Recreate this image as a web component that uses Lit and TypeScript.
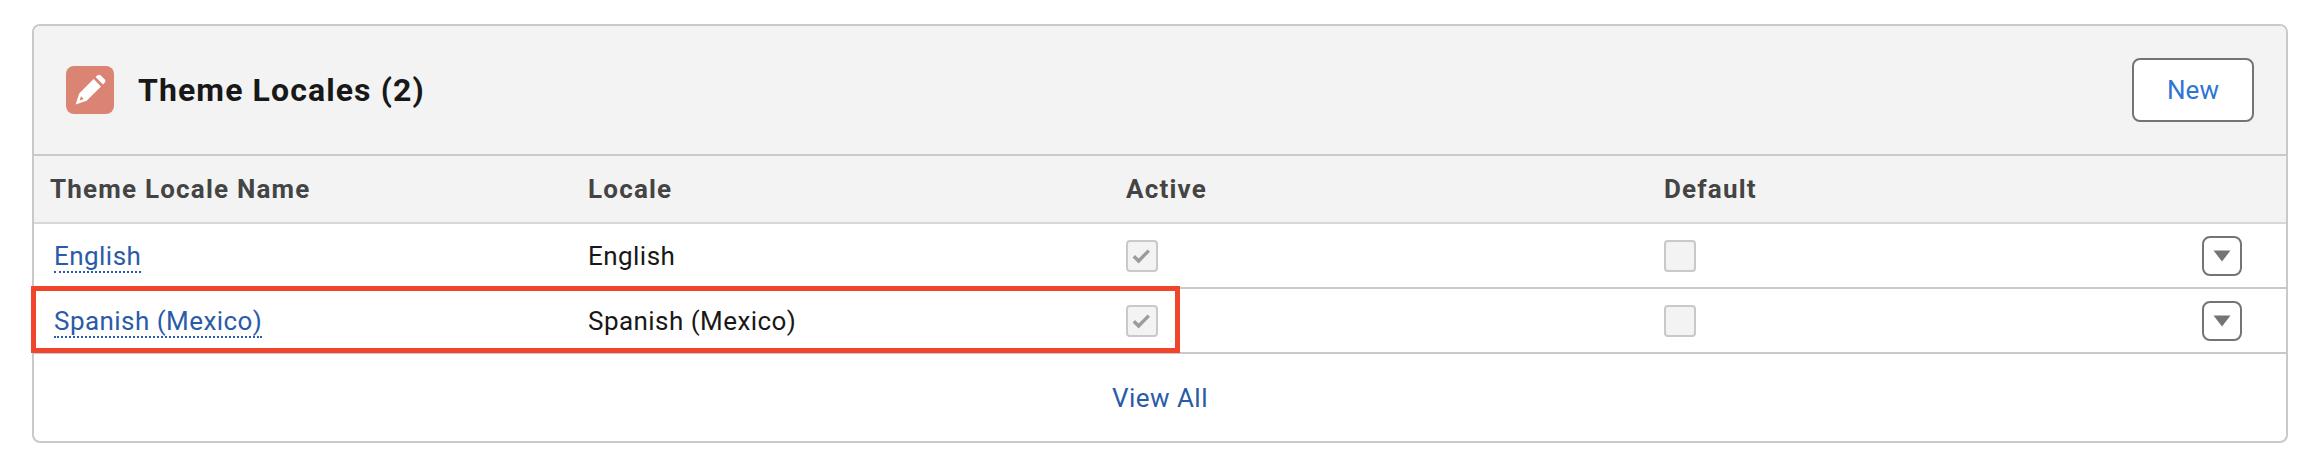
import { LitElement, html, css, svg } from "lit";
import { customElement } from "lit/decorators.js";

interface LocaleRow {
  name: string;
  locale: string;
  active: boolean;
  isDefault: boolean;
  highlighted: boolean;
}

const ROWS: LocaleRow[] = [
  { name: "English", locale: "English", active: true, isDefault: false, highlighted: false },
  { name: "Spanish (Mexico)", locale: "Spanish (Mexico)", active: true, isDefault: false, highlighted: true },
];

const PENCIL = svg`
  <path d="M31.2 9.4 29.6 11l7.4 7.4 1.6-1.6c1-1 1-2.6 0-3.6l-3.8-3.8c-1-1-2.6-1-3.6 0z" />
  <path fill-rule="evenodd" d="M27.6 13 13.2 27.4 9.6 38.4 20.6 34.8 35 20.4zM13.6 34.4l1.4-4.2 2.8 2.8z" />
`;

@customElement("app-root")
export class AppRoot extends LitElement {
  static styles = css`
    :host {
      display: block;
      width: 2320px;
      height: 460px;
      box-sizing: border-box;
      padding: 24px 32px 0 32px;
      background: #fff;
      font-family: Roboto, "Liberation Sans", sans-serif;
      color: #181818;
    }

    .card {
      box-sizing: border-box;
      height: 419px;
      border: 2px solid #c9c9c9;
      border-radius: 8px;
      background: #fff;
    }

    .header {
      box-sizing: border-box;
      height: 130px;
      display: flex;
      align-items: center;
      padding: 0 32px 0 32px;
      background: #f3f3f3;
      border-bottom: 2px solid #c9c9c9;
      border-radius: 6px 6px 0 0;
    }

    .icon {
      width: 48px;
      height: 48px;
      margin-right: 24px;
      border-radius: 8px;
      background: #dc8474;
      flex: none;
    }

    .icon svg {
      display: block;
      fill: #fff;
    }

    h2 {
      flex: 1;
      margin: 0;
      font-size: 32px;
      font-weight: 700;
      line-height: 48px;
      letter-spacing: 1.1px;
    }

    .new {
      box-sizing: border-box;
      width: 122px;
      height: 64px;
      border: 2px solid #747474;
      border-radius: 8px;
      background: #fff;
      color: #2e75d4;
      font: inherit;
      font-size: 26px;
    }

    .row {
      position: relative;
      box-sizing: border-box;
      display: grid;
      grid-template-columns: 554px 538px 538px 1fr;
      align-items: center;
      height: 65px;
      border-bottom: 2px solid #c9c9c9;
      font-size: 26px;
      letter-spacing: 0.45px;
    }

    .row > :first-child {
      padding-left: 16px;
    }

    .head {
      height: 68px;
      background: #f3f3f3;
      border-bottom-color: #d8d8d8;
      font-weight: 700;
      color: #444;
      letter-spacing: 1.2px;
    }

    .row > .name {
      padding-left: 20px;
    }

    a {
      color: #2a5ba8;
      text-decoration: none;
      border-bottom: 2px dotted #2a5ba8;
    }

    .box {
      box-sizing: border-box;
      width: 32px;
      height: 32px;
      border: 2px solid #c9c9c9;
      border-radius: 4px;
      background: #f3f3f3;
    }

    .box svg {
      display: block;
      fill: #9c9c9c;
    }

    .last {
      display: flex;
      align-items: center;
      justify-content: space-between;
      padding-right: 44px;
    }

    .menu {
      box-sizing: border-box;
      width: 40px;
      height: 40px;
      padding: 0;
      margin-left: auto;
      border: 2px solid #747474;
      border-radius: 8px;
      background: #fff;
    }

    .menu svg {
      display: block;
      margin: auto;
      fill: #747474;
    }

    .mark {
      position: absolute;
      left: -3px;
      top: -3px;
      box-sizing: border-box;
      width: 1149px;
      height: 67px;
      border: 5px solid #f0452b;
      pointer-events: none;
    }

    .footer {
      display: flex;
      justify-content: center;
      padding-top: 26px;
      font-size: 26px;
      line-height: 36px;
      letter-spacing: 0.45px;
    }

    .footer a {
      border-bottom: none;
    }
  `;

  private renderBox(checked: boolean) {
    return html`<div class="box">
      ${checked
        ? html`<svg width="28" height="28" viewBox="0 0 28 28">
            <path d="M4.6 15.4 7 13l3.6 3.6L19.6 7.4l2.4 2.4-11.4 11.6z" />
          </svg>`
        : ""}
    </div>`;
  }

  render() {
    return html`
      <div class="card">
        <div class="header">
          <div class="icon">
            <svg width="48" height="48" viewBox="0 0 48 48">${PENCIL}</svg>
          </div>
          <h2>Theme Locales (2)</h2>
          <button class="new">New</button>
        </div>
        <div class="row head">
          <div>Theme Locale Name</div>
          <div>Locale</div>
          <div>Active</div>
          <div>Default</div>
        </div>
        ${ROWS.map(
          (r) => html`
            <div class="row">
              <div class="name"><a href="#">${r.name}</a></div>
              <div>${r.locale}</div>
              <div>${this.renderBox(r.active)}</div>
              <div class="last">
                ${this.renderBox(r.isDefault)}
                <button class="menu">
                  <svg width="20" height="14" viewBox="0 0 20 14">
                    <path d="M1.5 1.5h17L10 12.5z" />
                  </svg>
                </button>
              </div>
              ${r.highlighted ? html`<div class="mark"></div>` : ""}
            </div>
          `
        )}
        <div class="footer"><a href="#">View All</a></div>
      </div>
    `;
  }
}
